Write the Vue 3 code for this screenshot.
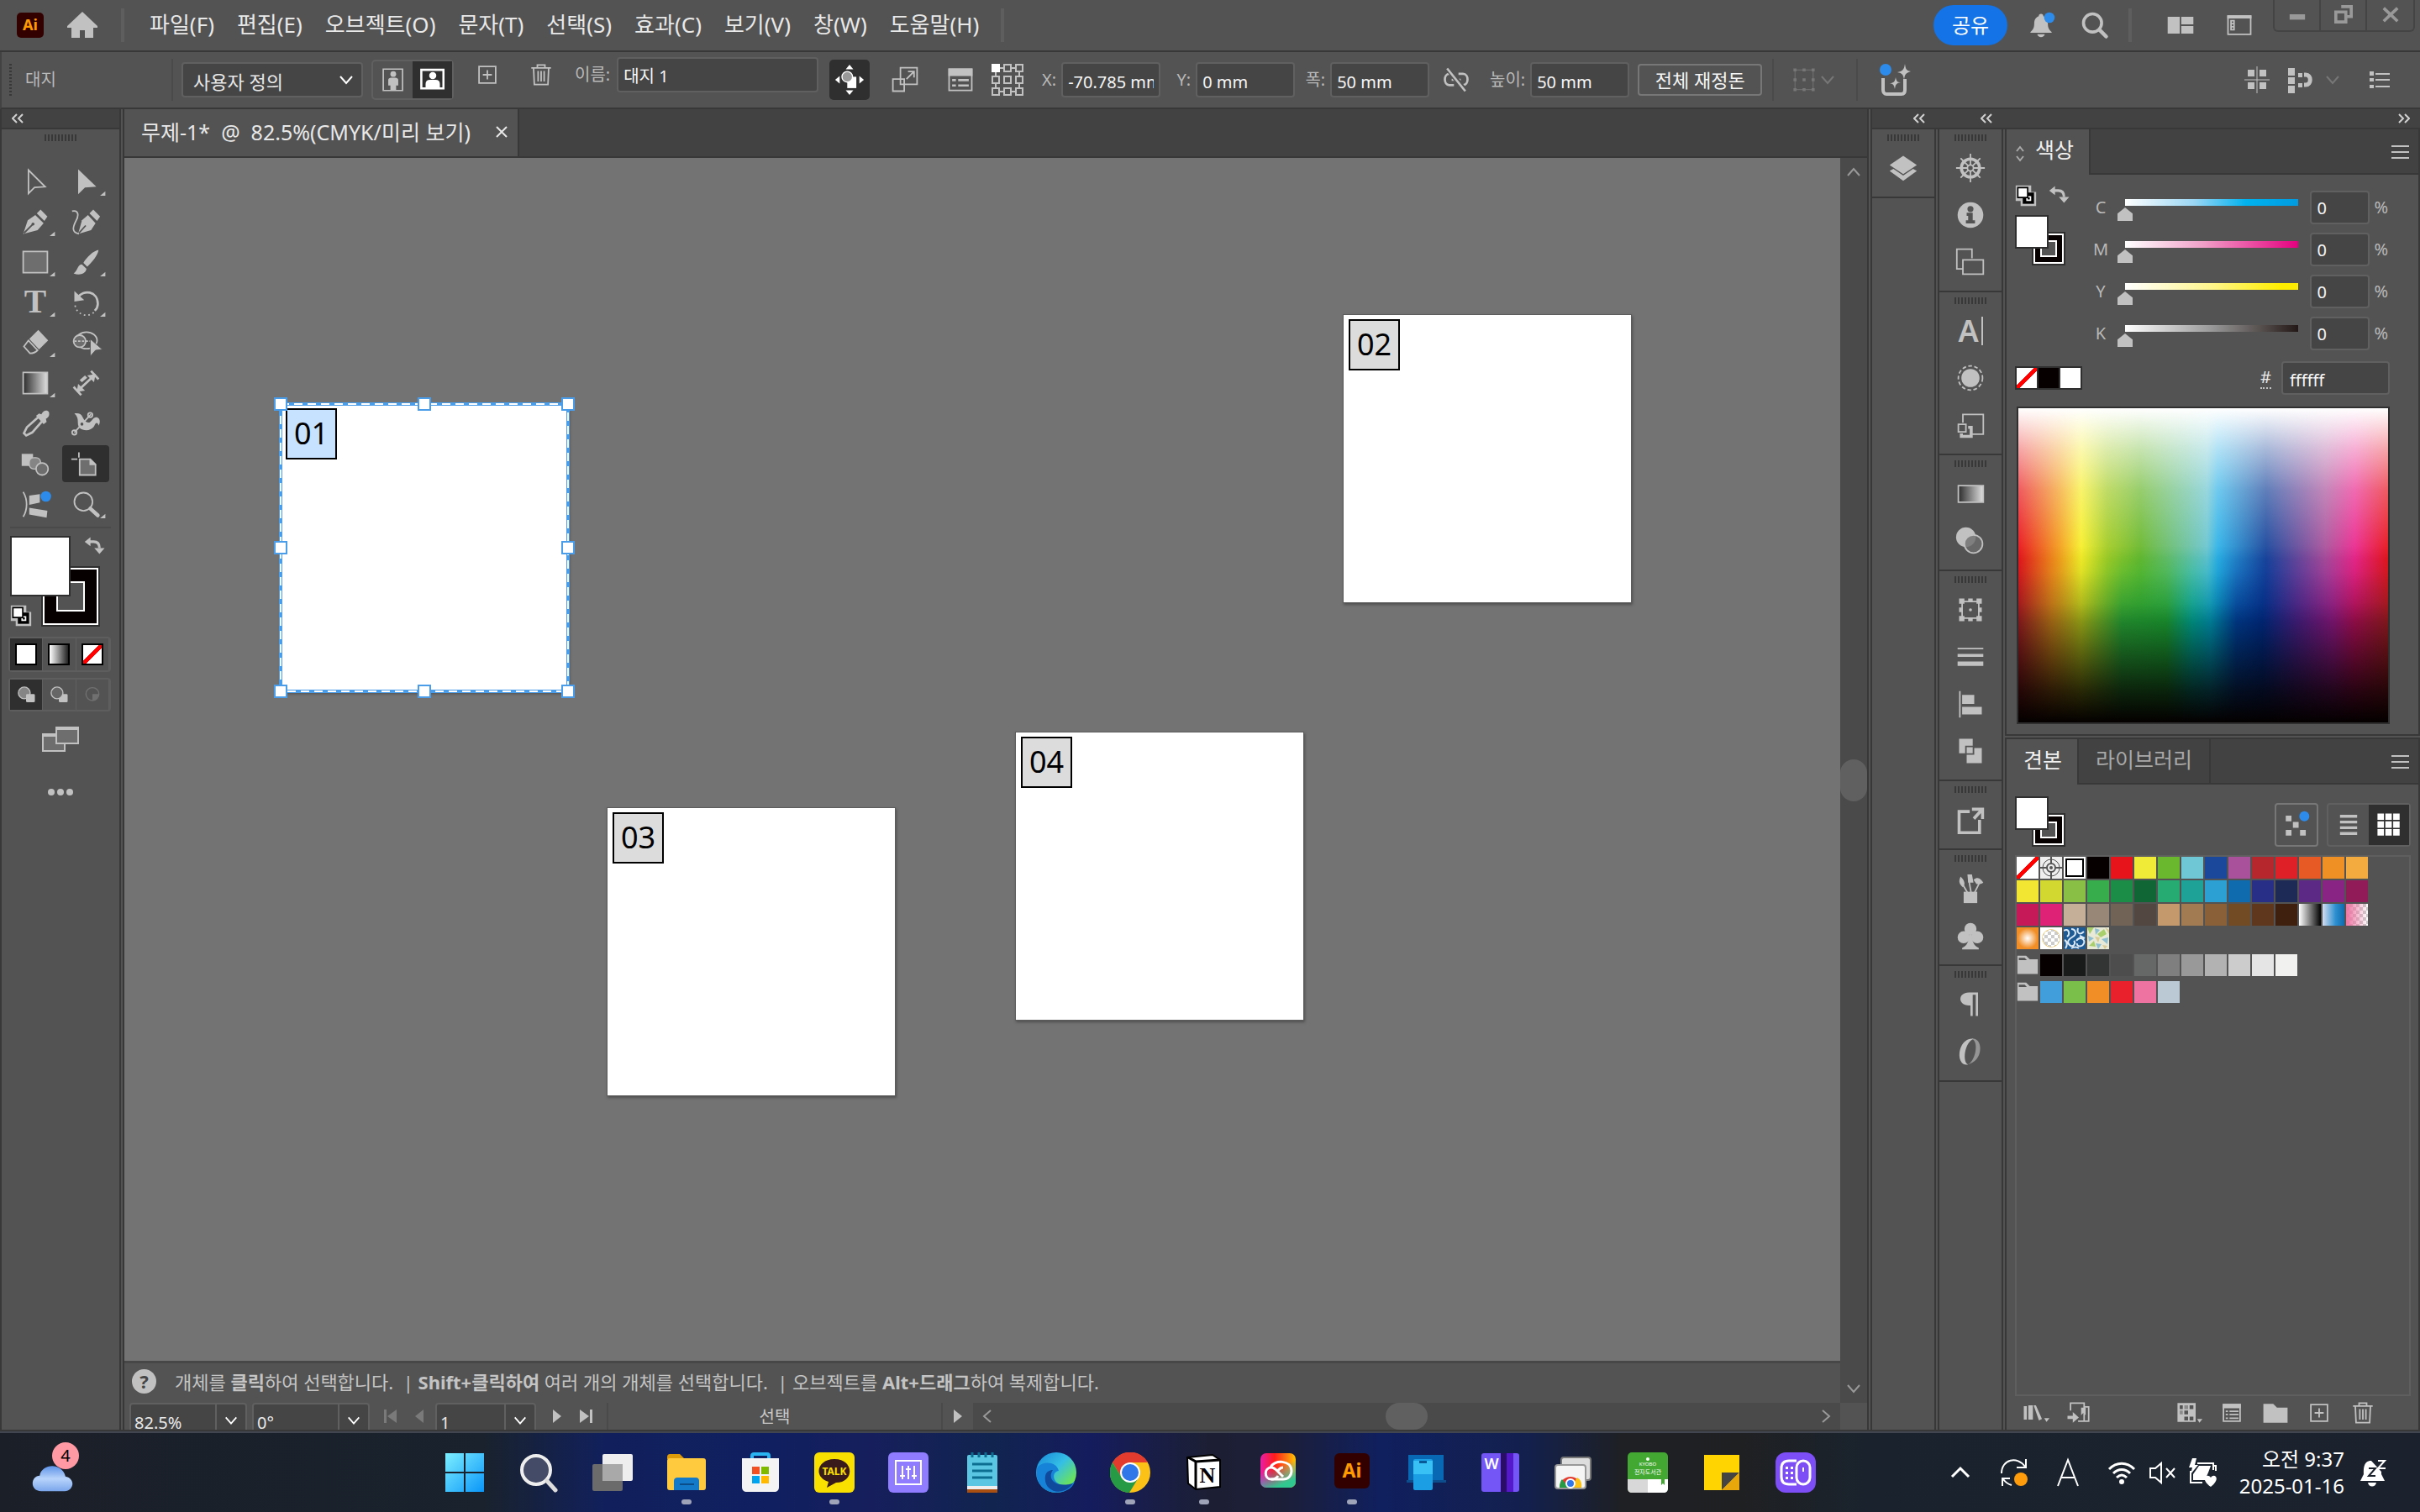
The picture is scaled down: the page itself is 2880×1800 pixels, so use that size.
<script setup>
import { ref } from 'vue'

const line = 'fill="none" stroke="currentColor" stroke-width="2"'
const thick = 'fill="none" stroke="currentColor" stroke-width="3"'

// 40x40 icons
const icons = {
  home: '<path d="M20 4 38 21V23H33V35H23V26H17V35H7V23H2V21Z"/>',
  bell: '<path d="M20 5c2 0 3 1 3 3 5 2 6 6 6 10 0 6 2 8 5 11v1H6v-1c3-3 5-5 5-11 0-4 1-8 6-10 0-2 1-3 3-3zM15 32h10c-1 5-9 5-10 0z"/><circle cx="31" cy="10" r="7" fill="#2d8ceb"/>',
  search: '<circle cx="17" cy="17" r="12" fill="none" stroke="currentColor" stroke-width="4"/><path d="m26 26 9 9" fill="none" stroke="currentColor" stroke-width="5" stroke-linecap="round"/>',
  layout: '<path d="M3 9h16v22H3zM21 9h16v10H21zM21 21h16v10H21z"/>',
  panel: `<path d="M5 8h30v24H5z" ${line}/><path d="M4 7h32v4H4zM8 13h6v14H8z"/><path d="M10 15h2v2h-2zM10 19h2v2h-2zM10 23h2v2h-2z" fill="#535353"/>`,
  portrait: `<path d="M6 5h27v30H6z" ${line}/><circle cx="20" cy="12" r="4"/><path d="M13 20c0-2 2-3 4-3h6c2 0 4 1 4 3v8h-3v7h-8v-7h-3z"/>`,
  landscape: `<path d="M4 6h31v26H4z" ${thick}/><circle cx="20" cy="14" r="5"/><path d="M10 32v-6c0-4 2-6 6-6h8c4 0 6 2 6 6v6z"/>`,
  add: `<path d="M9 9h22v22H9zM20 14v12M14 20h12" ${line}/>`,
  trash: `<path d="M7 11h26M15 10V7h10v3M10 11l1 22h18l1-22M16 15v14M20 15v14M24 15v14" ${line}/>`,
  move: '<path d="m20 0 5 6H15zM20 40l5-6H15zM1 20l6-5v10zM39 20l-6-5v10z"/><path d="M17 16h12v15H17z"/><circle cx="17" cy="16" r="7" fill="#999" stroke="#fff" stroke-width="1.5"/>',
  scale: `<path d="M14 4h22v22H14zM4 19h15v16H4z" ${line}/><path d="m22 19 9-9M24 9h8v8" ${line}/>`,
  options: `<path d="M5 6h30v28H5z" ${line}/><path d="M4 5h32v10H4zM9 19h5v3H9zM9 26h5v3H9zM17 19h14v3H17zM17 26h14v3H17z"/>`,
  refpoint: `<path d="M2 2h8v8H2zM16 2h8v8h-8zM30 2h8v8h-8zM2 16h8v8H2zM16 16h8v8h-8zM30 16h8v8h-8zM2 30h8v8H2zM16 30h8v8h-8zM30 30h8v8h-8zM10 6h6M24 6h6M10 34h6M24 34h6M6 10v6M34 10v6M6 24v6M34 24v6" ${line}/><path d="M1 1h10v10H1z" fill="#fff"/>`,
  unlink: `<path d="M17 12h-6c-8 0-8 15 0 15h6M23 12h6c8 0 8 15 0 15h-6M14 20h12" ${thick}/><path d="M8 4 33 36" stroke="#535353" stroke-width="7"/><path d="M8 5 32 35" ${thick}/>`,
  reshape: '<path d="M6 5h4v4H6zM18 5h4v4h-4zM30 5h4v4h-4zM6 18h4v4H6zM18 18h4v4h-4zM30 18h4v4h-4zM6 31h4v4H6zM18 31h4v4h-4zM30 31h4v4h-4z"/><path d="M8 7h24v26H8z" fill="none" stroke="currentColor"/>',
  sparkle: '<path d="M6 18v14c0 3 2 5 4 5h18c3 0 4-2 4-5V19" fill="none" stroke="currentColor" stroke-width="4"/><path d="M32 1c1 7 2 8 7 9-6 2-7 3-8 10-1-7-3-8-8-9 6-1 8-3 9-10zM21 17c1 5 2 6 6 6-5 1-6 2-7 8-1-5-2-6-6-7 5 0 6-2 7-7z"/><circle cx="9" cy="8" r="7" fill="#2d8ceb"/>',
  tiles: '<path d="M9 8h8v8H9zM23 8h8v8h-8zM9 23h8v8H9zM23 23h8v8h-8z"/><path d="M20 4v32M5 20h30" stroke="currentColor"/>',
  snap: '<path d="M3 6h8v9H3zM3 17h8v8H3zM3 27h8v9H3zM15 12h5v5h-5zM15 24h5v5h-5z"/><path d="M22 14h2c7 0 7 12 0 12h-2" fill="none" stroke="currentColor" stroke-width="5"/>',
  list: '<path d="M8 10h5v5H8zM8 18h5v4H8zM8 26h5v4H8zM15 12h17v2H15zM15 19h17v2H15zM15 27h17v2H15z"/>',
  menu: '<path d="M10 12h21v2H10zM10 19h21v2H10zM10 26h21v2H10z"/>',
  select: `<path d="M11 5v31l8-8 14-1z" ${line}/>`,
  direct: '<path d="M10 4v33l9-9 15-1z"/>',
  pen: '<path d="M4 36 10 18 20 11 31 22 23 31Z"/><path d="M22 9 27 4 36 13 32 19Z"/><path d="m5 35 11-11" stroke="#535353" stroke-width="2"/><circle cx="17" cy="23" r="2" fill="#535353"/>',
  curve: `<path d="M10 36 15 18 23 11 33 22 27 31Z"/><path d="M25 9 30 4 39 13 35 19Z"/><path d="m11 35 9-10" stroke="#535353" stroke-width="2"/><path d="M2 6c9-2 9 6 5 13-4 8-6 15 4 17" ${line}/>`,
  rect: '<path d="M4 6h32v28H4z" fill="#6e6e6e" stroke="currentColor" stroke-width="2"/>',
  brush: '<path d="M37 4c-7 1-16 10-20 17l5 5C29 20 36 11 37 4zM15 23c-6 0-5 8-11 12 7 3 16 1 17-6z"/>',
  rotate: `<path d="M9 14C17 2 36 5 36 22c0 4-2 7-4 9" ${thick}/><path d="M5 5v14l13-2z"/><path d="M6 24c2 13 18 17 26 8" fill="none" stroke="currentColor" stroke-width="2" stroke-dasharray="2 4"/>`,
  eraser: `<path d="M24 3 37 17 25 29 12 15Z"/><path d="m11 17-6 8 8 9c6 0 8-2 10-4z" ${line}/>`,
  builder: `<ellipse cx="21" cy="17" rx="14" ry="11" ${line}/><circle cx="12" cy="18" r="8" fill="#6e6e6e" stroke="currentColor" stroke-width="2"/><path d="M5 18h22" stroke="currentColor" stroke-width="2" stroke-dasharray="3 2"/><path d="M26 15v23l7-8 9-1z" stroke="#535353" stroke-width="1"/>`,
  gradient: '<path d="M4 6h32v28H4z" fill="url(#gray-ramp)" stroke="currentColor" stroke-width="2"/>',
  measure: `<path d="m27 4 10 11M4 25l10 11M11 29l19-18" ${thick}/><path d="m33 8-2 11-9-9zM8 32l2-11 9 9zM12 16l7-6 3 3-7 6z"/>`,
  dropper: `<path d="M26 10 9 25 5 33l3 3 8-4 15-17" ${thick}/><path d="m21 10 4-3 3 1c3-6 8-6 10-3 1 4 0 7-4 9l1 4-4 3z"/>`,
  warp: `<path d="M5 7c5-1 9 0 11 5 2 4 6 9 10 6 3-2 4-7 9-6 5 2 4 8 2 11-1-4-3-5-5-1-3 8-14 9-20 4C7 21 13 14 5 7z"/><path d="M5 32 27 8" ${line}/><circle cx="5" cy="32" r="3" ${line}/><circle cx="26" cy="9" r="3" ${line}/><circle cx="15" cy="21" r="3" fill="#535353" stroke="currentColor" stroke-width="2"/>`,
  blend: '<path d="M2 7h15v16H2z"/><rect x="12" y="12" width="15" height="15" rx="6" fill="#858585" stroke="currentColor" stroke-width="1.5"/><circle cx="29" cy="27" r="8" fill="#6e6e6e" stroke="currentColor" stroke-width="2"/>',
  artboard: `<path d="M12 14h14l7 7v14H12z" fill="#6e6e6e" stroke="currentColor" stroke-width="2"/><path d="M25 14v8h9z"/><path d="M11 5v7M1 14h8" ${line}/>`,
  slice: `<path d="M4 4c6 10 6 23 0 33" ${line}/><path d="m12 9 14-2v11l-14 3zM12 25l24 4-1 9-23-4z"/><circle cx="34" cy="10" r="7" fill="#2d8ceb"/>`,
  zoom: `<circle cx="17" cy="17" r="12" ${line}/><path d="m26 26 10 9" fill="none" stroke="currentColor" stroke-width="5" stroke-linecap="round"/>`,
  swap: '<path d="M12 13h7c7 0 9 4 9 10" fill="none" stroke="currentColor" stroke-width="4"/><path d="M5 13l9-7v14zM20 23h16l-8 9z"/>',
  defaults: '<path d="M7 7h22v9h7v20H14v-7H7z" fill="#c1c1c1"/><path d="M17 17h16v16H17z" fill="#000"/><path d="M23 23h5v5h-5z" fill="none" stroke="#fff" stroke-width="2"/><path d="M10 10h14v14H10z" fill="#fff" stroke="#000" stroke-width="2"/>',
  screens: `<path d="M1 15h26v20H1z" fill="#6e6e6e" stroke="currentColor" stroke-width="2"/><path d="M17 7h26v19H17z" fill="#6e6e6e" stroke="currentColor" stroke-width="2"/><path d="M16 6h28v4H16zM0 14h16v4H0z"/>`,
  drawNormal: '<circle cx="17" cy="17" r="10" fill="#858585" stroke="currentColor" stroke-width="2"/><rect x="20" y="19" width="15" height="14" rx="2"/>',
  drawBehind: '<rect x="20" y="19" width="15" height="14" rx="2"/><circle cx="17" cy="17" r="10" fill="#666" stroke="currentColor" stroke-width="2"/>',
  drawInside: `<circle cx="20" cy="19" r="11" ${line}/><path d="M20 19h10v3c-2 6-5 8-10 8z"/>`,
  layers: '<path d="M20 4 38 16 20 28 2 16Z"/><path d="m2 24 5-3 13 9 13-9 5 3-18 13z"/>',
  wheel: `<circle cx="20" cy="20" r="12" fill="none" stroke="currentColor" stroke-width="4"/><circle cx="20" cy="20" r="4" ${line}/><path d="M20 1v15M20 24v15M1 20h15M24 20h15M7 7l10 10M23 23l10 10M33 7 23 17M17 23 7 33" ${line}/>`,
  info: '<circle cx="20" cy="20" r="17"/><circle cx="20" cy="12" r="4" fill="#535353"/><path d="M15 17h8v10h3v4H14v-4h3v-6h-2z" fill="#535353"/>',
  copies: `<path d="M10 29H2V3h20v12M10 17h27v19H10z" ${line}/>`,
  stars: `<circle cx="20" cy="20" r="12"/><circle cx="20" cy="20" r="16" fill="none" stroke="currentColor" stroke-width="2" stroke-dasharray="5 3"/>`,
  graphicStyle: `<path d="M10 17V6h27v26H19" ${line}/><path d="M4 19h10v10H4z" ${line}/><path d="M17 23h4v12H8v-4" fill="none" stroke="currentColor" stroke-width="4"/>`,
  gradientDock: '<path d="M4 9h33v22H4z" fill="url(#gray-ramp)" stroke="currentColor" stroke-width="2"/>',
  transparency: '<circle cx="14" cy="15" r="13"/><circle cx="24" cy="24" r="12" fill="#6e6e6e" fill-opacity=".8" stroke="currentColor" stroke-width="2"/>',
  transform: `<path d="M9 9h22v22H9z" ${line}/><path d="M5 5h7v7H5zM17 5h6v5h-6zM28 5h7v7h-7zM5 17h5v6H5zM30 17h5v6h-5zM5 28h7v7H5zM17 30h6v5h-6zM28 28h7v7h-7z"/><circle cx="20" cy="20" r="2"/>`,
  stroke: '<path d="M3 8h34v2H3zM3 16h34v4H3zM3 26h34v6H3z"/>',
  align: '<path d="M5 3h2v35H5zM9 8h16v12H9zM9 24h26v10H9z"/>',
  pathfinder: '<path d="M5 4h18v12h12v20H15V23H5z"/><path d="M14 14h10v10H14z" fill="#c1c1c1" stroke="#535353" stroke-width="2"/>',
  exportTo: `<path d="M19 9H5v28h27V20" fill="none" stroke="currentColor" stroke-width="4"/><path d="M22 4h16v15h-4v-8L26 20l-3-3 8-9h-9z"/>`,
  brushes: '<path d="M11 24h18v15H11z"/><path d="m9 13 7 12M18 9l3 17M32 12l-7 14" fill="none" stroke="currentColor" stroke-width="2"/><path d="M7 4c-3 6-2 10 3 14 4-4 2-9-3-14zM16 1h6l2 11h-7zM24 8c6-5 10-1 13 4-4 3-8 2-9 2z"/>',
  club: '<circle cx="20" cy="11" r="8"/><circle cx="11" cy="22" r="8"/><circle cx="29" cy="22" r="8"/><path d="M18 18h4c0 9 2 15 9 18v2H9v-2c7-3 9-9 9-18z"/>',
  paragraph: '<path d="M18 4h12v31h-3V7h-4v28h-3V21h-2C3 21 3 4 18 4z"/>',
  openType: '<path d="M24 3C10 1 2 20 7 32c2 5 7 6 10 5C9 34 12 8 24 3z"/><path d="M22 3c15-2 16 30-6 34 10-3 16-30 6-34z" opacity=".6"/>',
  spread: '<path d="M5 7h8v8H5zM15 16h8v8h-8zM5 27h8v8H5zM25 27h8v8h-8z"/><circle cx="31" cy="8" r="7" fill="#2d8ceb"/>',
  rows: '<path d="M8 6h24v4H8zM8 14h24v4H8zM8 22h24v4H8zM8 30h24v4H8z"/>',
  grid: '<path d="M4 4h9v9H4zM15 4h9v9h-9zM26 4h9v9h-9zM4 15h9v9H4zM15 15h9v9h-9zM26 15h9v9h-9zM4 26h9v9H4zM15 26h9v9h-9zM26 26h9v9h-9z"/>',
  folder: '<path d="M6 8h12l5 5h11v20H6zM8 11v3h11l-3-3z" fill-rule="evenodd"/>',
  library: '<path d="M5 11h4v18H5zM11 10h6v19h-6zM18 10h3l8 18-4 2zM32 27h7l-4 5z"/>',
  place: `<path d="M9 17V7h18v24h6V12h-5M19 31h14" ${line}/><path d="M5 24h7v-5l8 7-8 7v-5H5zM23 13h6v10l-3-3-3 3z"/>`,
  kinds: '<path d="M6 7h24v25H6zM32 28h7l-4 5z"/><path d="M9 10h4v5H9zM22 10h5v5h-5zM15 17h5v5h-5zM15 25h5v5h-5zM22 25h5v5h-5z" fill="#535353"/><path d="M15 10h5v5h-5zM9 17h4v5H9z" fill="#8a8a8a"/>',
  sheet: `<path d="M9 9h22v22H9z" ${line}/><path d="M8 8h24v6H8zM12 17h3v2h-3zM12 21h3v2h-3zM12 26h3v2h-3zM17 17h12v2H17zM17 21h12v2H17zM17 26h12v2H17z"/>`,
  folderSolid: '<path d="M4 8h13l5 5h14v20H4z"/>'
}

const menus = ['파일(F)', '편집(E)', '오브젝트(O)', '문자(T)', '선택(S)', '효과(C)', '보기(V)', '창(W)', '도움말(H)']

const tools = [
  { name: 'select', label: '선택 도구' },
  { name: 'direct', label: '직접 선택 도구', more: true },
  { name: 'pen', label: '펜 도구', more: true },
  { name: 'curve', label: '곡률 도구' },
  { name: 'rect', label: '사각형 도구', more: true },
  { name: 'brush', label: '페인트브러쉬 도구', more: true },
  { name: 'type', label: '문자 도구', more: true },
  { name: 'rotate', label: '회전 도구', more: true },
  { name: 'eraser', label: '지우개 도구', more: true },
  { name: 'builder', label: '도형 구성 도구' },
  { name: 'gradient', label: '그레이디언트 도구', more: true },
  { name: 'measure', label: '치수 도구' },
  { name: 'dropper', label: '스포이드 도구' },
  { name: 'warp', label: '퍼펫 뒤틀기 도구' },
  { name: 'blend', label: '블렌드 도구' },
  { name: 'artboard', label: '대지 도구' },
  { name: 'slice', label: '교차 도구' },
  { name: 'zoom', label: '돋보기 도구', more: true }
]
const activeTool = ref('artboard')

const artboards = [
  { no: '01', x: 186, y: 293 },
  { no: '02', x: 1451, y: 187 },
  { no: '03', x: 575, y: 774 },
  { no: '04', x: 1061, y: 684 }
]
const activeBoard = ref('01')
const handles = [[0, 0], [171, 0], [342, 0], [0, 171], [342, 171], [0, 342], [171, 342], [342, 342]]

const dockGroups = [
  ['wheel', 'info', 'copies'],
  ['character', 'stars', 'graphicStyle'],
  ['gradientDock', 'transparency'],
  ['transform', 'stroke', 'align', 'pathfinder'],
  ['exportTo'],
  ['brushes', 'club'],
  ['paragraph', 'openType']
]

const channels = ref([
  { key: 'c', value: 0 },
  { key: 'm', value: 0 },
  { key: 'y', value: 0 },
  { key: 'k', value: 0 }
])
const hex = ref('ffffff')

const swatches = [
  'none', 'registration', 'white', '#060000', '#e8141b', '#f0eb37', '#6ab82e', '#6fc6d4', '#1c489b', '#a9529b', '#b5262d', '#df2027', '#e75a26', '#ef9025', '#f3ab40',
  '#f2e632', '#d2d82f', '#89bf45', '#38ad4b', '#1c8d46', '#116636', '#26ab72', '#1ea297', '#2c9fd3', '#0f6bae', '#272f87', '#1c2a55', '#5c2a85', '#892384', '#911b59',
  '#c51a57', '#de2276', '#c5af98', '#988776', '#716456', '#534741', '#c49a6c', '#a37b52', '#896038', '#724b24', '#5e371c', '#3f200f', 'bw', 'blue', 'pink',
  'glow', 'checker', 'waves', 'leaves'
]
const grays = ['#060000', '#191b1b', '#333535', '#4d4d4d', '#666767', '#7f7f7f', '#999', '#b2b2b2', '#ccc', '#e5e5e5', '#f1f1f0']
const brights = ['#429ddb', '#7abf4a', '#f18e26', '#e8212d', '#ee73a1', '#bac9d3']

const isColor = (s) => s.startsWith('#')

// 48x48 taskbar icons
const apps = [
  { id: 'start', svg: '<path d="M1 1h22v22H1zM25 1h22v22H25zM1 25h22v22H1zM25 25h22v22H25z" fill="url(#win)"/>' },
  { id: 'search', svg: '<circle cx="21" cy="21" r="17" fill="#444b66" stroke="#eee" stroke-width="4"/><path d="m34 34 10 11" stroke="#ddd" stroke-width="5" stroke-linecap="round"/>' },
  { id: 'taskview', svg: '<rect x="12" y="2" width="36" height="32" rx="2" fill="#eee"/><rect y="14" width="36" height="32" rx="2" fill="#6b6b6b"/><path d="M12 14h24v20H12z" fill="#a9a9a9"/>' },
  { id: 'explorer', run: true, svg: '<path d="M1 6c0-3 1-4 4-4h11l6 6H1z" fill="#dd9b09"/><rect x="1" y="7" width="46" height="38" rx="3" fill="#ffca3e"/><path d="M9 45V34c0-3 2-4 4-4h22c3 0 4 2 4 4v11z" fill="#1379c9"/><path d="M16 37h17v2H16z" fill="#0b4d88"/>' },
  { id: 'store', svg: '<path d="M12 12V4c0-3 2-4 4-4h16c3 0 4 2 4 4v8h-4V4H16v8z" fill="#2ab4f1"/><path d="M2 7h44v34c0 4-2 6-6 6H8c-4 0-6-2-6-6z" fill="#f4f4f4"/><path d="M14 17h9v9h-9z" fill="#f25022"/><path d="M25 17h9v9h-9z" fill="#7fba00"/><path d="M14 28h9v9h-9z" fill="#00a4ef"/><path d="M25 28h9v9h-9z" fill="#ffb900"/>' },
  { id: 'talk', run: true, svg: '<rect width="48" height="48" rx="6" fill="#f9e000"/><path d="M24 8c24 0 24 28 2 28l-11 6 2-7C-2 29 4 8 24 8z" fill="#391b1b"/><text x="24" y="27" font-size="12" font-weight="700" text-anchor="middle" fill="#f9e000">TALK</text>' },
  { id: 'mixer', svg: '<rect width="48" height="48" rx="6" fill="#8f7cff"/><path d="M9 10h30v28H9zM17 16v16M24 16v16M31 16v16M14 28h6M21 20h6M28 28h6" fill="none" stroke="#fff" stroke-width="2"/>' },
  { id: 'notepad', svg: '<rect x="6" y="3" width="36" height="44" rx="2" fill="#5ac6e2"/><path d="M6 40h36v4H6z" fill="#eee"/><path d="M6 44h36v4H6z" fill="#a94f12"/><path d="M12 0v6M20 0v6M28 0v6M36 0v6M12 14h24M12 22h24M12 30h24" stroke="#0c6f91" stroke-width="3"/>' },
  { id: 'edge', svg: '<circle cx="24" cy="24" r="24" fill="url(#edge)"/><path d="M1 19C6 10 24 10 27 22c-8 1-8 12 1 16 8 3 14 1 18-4-2 9-12 14-22 14C8 48-2 34 1 19z" fill="#1683d8"/><path d="M20 21c-7 10 2 22 24 16-12 17-36 10-33-9 1-5 5-7 9-7z" fill="#0f4a9c"/>' },
  { id: 'chrome', run: true, svg: '<circle cx="24" cy="24" r="24" fill="#fbc116"/><path d="M3 12a24 24 0 0 1 42 0H24L14 30z" fill="#e33b2e"/><path d="M3 12a24 24 0 0 0 20 36l11-18-20 0z" fill="#269a45"/><circle cx="24" cy="24" r="12" fill="#fff"/><circle cx="24" cy="24" r="10" fill="#3078ea"/>' },
  { id: 'notion', run: true, svg: '<path d="m4 6 30-3 9 6v32l-29 3-9-7z" fill="#fff" stroke="#000" stroke-width="2"/><path d="m5 6 9 5v33M14 11l29-2" fill="none" stroke="#000" stroke-width="3"/><text x="28" y="36" font-size="26" font-weight="700" font-family="Liberation Serif" text-anchor="middle">N</text>' },
  { id: 'cloud', svg: '<rect x="3" y="1" width="42" height="41" rx="7" fill="url(#cc)"/><rect x="3" y="1" width="42" height="41" rx="7" fill="url(#cc-low)"/><path d="M24 28c-2 3-5 4-8 4-9 0-9-14 0-14 3 0 5 2 7 4l7 7" fill="none" stroke="#fff" stroke-width="3"/><path d="M15 18c4-10 25-9 25 4 0 6-4 10-10 10H16M30 18c-3 0-5 2-7 5" fill="none" stroke="#fff" stroke-width="3"/>' },
  { id: 'ai', run: true, svg: '<rect x="3" y="1" width="42" height="42" rx="6" fill="#330000"/><text x="24" y="30" font-size="23" font-weight="700" text-anchor="middle" fill="#ff9a00">Ai</text>' },
  { id: 'phone', svg: '<path d="M3 3h42v31H3z" fill="#0968b3"/><path d="M1 33h47v3H1z" fill="#0b4d8d"/><rect x="9" y="8" width="23" height="37" rx="2" fill="#1b9ee3"/><path d="M9 10h23v16H9z" fill="#37c1f4"/><path d="M16 10h9v3h-9z" fill="#075997"/>' },
  { id: 'wbook', svg: '<rect x="2" y="1" width="45" height="46" rx="3" fill="#7455f5"/><path d="M25 1h7v46h-7z" fill="#2a0d66"/><path d="M32 1h8v46h-8z" fill="#5618cb"/><text x="14" y="20" font-size="18" font-weight="600" text-anchor="middle" fill="#fff">W</text>' },
  { id: 'remote', svg: '<rect x="9" y="6" width="35" height="27" rx="3" fill="#ddd" stroke="#777" stroke-width="2"/><rect x="2" y="15" width="36" height="28" rx="3" fill="#f5f5f5" stroke="#999" stroke-width="2"/><path d="M7 42a13 13 0 0 1 26 0z" fill="#e33b2e"/><path d="M20 42l8-12c4 2 6 7 5 12z" fill="#fbc116"/><path d="M7 42c0-4 1-8 3-10l8 10z" fill="#269a45"/><circle cx="20" cy="37" r="5" fill="#3078ea" stroke="#fff" stroke-width="2"/>' },
  { id: 'library', svg: '<rect width="48" height="48" rx="5" fill="#43a832"/><path d="M0 32h24v16H5c-3 0-5-2-5-5z" fill="#d8d8d8"/><path d="M24 32h24v11c0 3-2 5-5 5H24z" fill="#fff"/><path d="M40 32h4v7l-2-2-2 2z" fill="#43a832"/><circle cx="24" cy="8" r="2" fill="#fff"/><text x="24" y="16" font-size="6" text-anchor="middle" fill="#fff">KYOBO</text><text x="24" y="26" font-size="7" text-anchor="middle" fill="#fff">전자도서관</text>' },
  { id: 'sticky', svg: '<path d="M3 3h42v42H3z" fill="#ffd400"/><path d="M24 24h21L24 45z" fill="#444"/><path d="M45 24v21H24z" fill="#e8a80b"/>' },
  { id: 'capture', svg: '<rect width="48" height="48" rx="12" fill="#7d4df5"/><path d="M25 10h-9c-6 0-9 3-9 9v10c0 6 3 9 9 9h9" fill="none" stroke="#fff" stroke-width="3"/><rect x="25" y="10" width="16" height="28" rx="8" fill="none" stroke="#fff" stroke-width="3"/><path d="M12 17h3v3h-3zM18 17h3v3h-3zM12 23h3v3h-3zM18 23h3v3h-3zM12 29h3v3h-3zM18 29h3v3h-3zM32 18h2v5h-2z" fill="#fff"/>' }
]
</script>

<template>
  <div class="app">
    <svg class="defs" aria-hidden="true">
      <defs>
        <linearGradient id="gray-ramp"><stop offset="0" stop-color="#2c2c2c" /><stop offset="1" stop-color="#e0e0e0" /></linearGradient>
        <linearGradient id="win" x2="1" y2="1"><stop offset="0" stop-color="#7defff" /><stop offset="1" stop-color="#0a96f8" /></linearGradient>
        <linearGradient id="edge" x2="1" y2="1"><stop offset="0" stop-color="#1686d9" /><stop offset=".45" stop-color="#35bfe5" /><stop offset=".8" stop-color="#6ae35a" /></linearGradient>
        <linearGradient id="cc"><stop offset="0" stop-color="#e81ea8" /><stop offset=".4" stop-color="#ff1c1c" /><stop offset=".75" stop-color="#ff7a10" /><stop offset="1" stop-color="#ffc800" /></linearGradient>
        <linearGradient id="cc-low" x2=".4" y2="1"><stop offset=".5" stop-color="#3aa0f0" stop-opacity="0" /><stop offset="1" stop-color="#30c890" /></linearGradient>
        <linearGradient id="sky" x2="0" y2="1"><stop offset="0" stop-color="#5e93e8" /><stop offset=".5" stop-color="#b8d4fb" /><stop offset="1" stop-color="#7ba6ec" /></linearGradient>
      </defs>
    </svg>

    <!-- 메뉴 막대 -->
    <header class="menubar">
      <span class="ai-logo">Ai</span>
      <button class="plain home" aria-label="홈"><svg class="icon" viewBox="0 0 40 40" v-html="icons.home"></svg></button>
      <span class="rule"></span>
      <nav class="menus">
        <button v-for="m in menus" :key="m" class="plain">{{ m }}</button>
      </nav>
      <span class="rule"></span>
      <div class="menubar-right">
        <button class="share">공유</button>
        <button class="plain cell" aria-label="알림"><svg class="icon" viewBox="0 0 40 40" v-html="icons.bell"></svg></button>
        <button class="plain cell" aria-label="검색"><svg class="icon" viewBox="0 0 40 40" v-html="icons.search"></svg></button>
        <span class="rule"></span>
        <div class="workspace">
          <button class="plain" aria-label="문서 정돈"><svg class="icon" viewBox="0 0 40 40" v-html="icons.layout"></svg></button>
          <button class="plain" aria-label="작업 영역"><svg class="icon" viewBox="0 0 40 40" v-html="icons.panel"></svg></button>
        </div>
        <div class="window-buttons">
          <button aria-label="최소화"><svg viewBox="0 0 24 24"><path d="M2 12h20v7H2z" /></svg></button>
          <button aria-label="이전 크기로"><svg viewBox="0 0 24 24"><path d="M9 2h13v13h-7M2 9h13v13H2z" fill="none" stroke="currentColor" stroke-width="4" /></svg></button>
          <button aria-label="닫기"><svg viewBox="0 0 24 24"><path d="m3 4 18 17M21 4 3 21" fill="none" stroke="currentColor" stroke-width="4" /></svg></button>
        </div>
      </div>
    </header>

    <!-- 옵션 막대 -->
    <section class="options">
      <span class="dot-grip"></span>
      <span class="mode">대지</span>
      <span class="vline"></span>
      <div class="combo preset">
        <select aria-label="사전 설정"><option>사용자 정의</option></select>
        <svg viewBox="0 0 20 20"><path d="m3 6 7 8 7-8" /></svg>
      </div>
      <div class="orient">
        <button class="plain" aria-label="세로"><svg class="icon" viewBox="0 0 40 40" v-html="icons.portrait"></svg></button>
        <button class="plain on" aria-label="가로"><svg class="icon" viewBox="0 0 40 40" v-html="icons.landscape"></svg></button>
      </div>
      <div class="name-group">
        <button class="plain cell" aria-label="새 대지"><svg class="icon" viewBox="0 0 40 40" v-html="icons.add"></svg></button>
        <button class="plain cell" aria-label="대지 삭제"><svg class="icon" viewBox="0 0 40 40" v-html="icons.trash"></svg></button>
        <label for="board-name">이름:</label>
        <input id="board-name" class="box" value="대지 1" />
      </div>
      <button class="plain move on" aria-label="아트웍 이동"><svg class="icon" viewBox="0 0 40 40" v-html="icons.move"></svg></button>
      <div class="option-icons">
        <button class="plain cell" aria-label="크기 조정"><svg class="icon" viewBox="0 0 40 40" v-html="icons.scale"></svg></button>
        <button class="plain cell" aria-label="대지 옵션"><svg class="icon" viewBox="0 0 40 40" v-html="icons.options"></svg></button>
        <button class="plain cell ref" aria-label="기준점"><svg class="icon" viewBox="0 0 40 40" v-html="icons.refpoint"></svg></button>
      </div>
      <div class="field"><label for="pos-x">X:</label><input id="pos-x" class="box" value="-70.785 mm" /></div>
      <div class="field"><label for="pos-y">Y:</label><input id="pos-y" class="box" value="0 mm" /></div>
      <div class="field"><label for="board-w">폭:</label><input id="board-w" class="box" value="50 mm" /></div>
      <button class="plain cell" aria-label="비율 제한"><svg class="icon small" viewBox="0 0 40 40" v-html="icons.unlink"></svg></button>
      <div class="field wide"><label for="board-h">높이:</label><input id="board-h" class="box" value="50 mm" /></div>
      <button class="rearrange">전체 재정돈</button>
      <span class="vline"></span>
      <button class="plain reshape" disabled aria-label="모양 변경">
        <svg class="icon" viewBox="0 0 40 40" v-html="icons.reshape"></svg>
        <svg class="chev" viewBox="0 0 20 20"><path d="m3 6 7 8 7-8" /></svg>
      </button>
      <span class="vline"></span>
      <button class="plain spark" aria-label="생성형 도구"><svg class="icon" viewBox="0 0 40 40" v-html="icons.sparkle"></svg></button>
      <div class="option-right">
        <button class="plain" aria-label="격자"><svg class="icon" viewBox="0 0 40 40" v-html="icons.tiles"></svg></button>
        <button class="plain snap" aria-label="스냅"><svg class="icon" viewBox="0 0 40 40" v-html="icons.snap"></svg></button>
        <svg class="chev" viewBox="0 0 20 20"><path d="m3 6 7 8 7-8" /></svg>
        <button class="plain last" aria-label="옵션 메뉴"><svg class="icon" viewBox="0 0 40 40" v-html="icons.list"></svg></button>
      </div>
    </section>

    <main class="workspace-area">
      <!-- 도구 상자 -->
      <aside class="toolbox">
        <div class="strip"><svg class="dbl" viewBox="0 0 14 12"><path d="M6 1 1 6l5 5M13 1 8 6l5 5" /></svg></div>
        <span class="grip"></span>
        <div class="tools">
          <button
            v-for="t in tools"
            :key="t.name"
            class="plain tool"
            :class="{ on: activeTool === t.name }"
            :aria-label="t.label"
            @click="activeTool = t.name"
          >
            <svg class="icon" viewBox="0 0 40 40">
              <text v-if="t.name === 'type'" class="type-glyph" x="20" y="33" text-anchor="middle">T</text>
              <g v-else v-html="icons[t.name]"></g>
              <path v-if="t.more" d="M46 33v6h-7z" />
            </svg>
          </button>
        </div>
        <div class="hline"></div>
        <div class="paint">
          <span class="stroke-box"><i></i></span>
          <span class="fill-box"></span>
          <button class="plain swap" aria-label="칠과 획 교체"><svg class="icon" viewBox="4 4 34 34" v-html="icons.swap"></svg></button>
          <button class="plain defaults" aria-label="초기값"><svg class="icon" viewBox="6 6 31 31" v-html="icons.defaults"></svg></button>
        </div>
        <div class="trio">
          <button class="on" aria-label="색상"><span class="chip"></span></button>
          <button aria-label="그레이디언트"><span class="chip ramp"></span></button>
          <button aria-label="없음"><span class="chip none"></span></button>
        </div>
        <div class="trio draw">
          <button class="on" aria-label="표준 그리기"><svg class="icon" viewBox="0 0 40 40" v-html="icons.drawNormal"></svg></button>
          <button aria-label="배경 그리기"><svg class="icon" viewBox="0 0 40 40" v-html="icons.drawBehind"></svg></button>
          <button class="off" aria-label="내부 그리기"><svg class="icon" viewBox="0 0 40 40" v-html="icons.drawInside"></svg></button>
        </div>
        <button class="plain screens" aria-label="화면 모드"><svg class="icon" viewBox="0 0 44 40" v-html="icons.screens"></svg></button>
        <button class="plain dots" aria-label="도구 모음 편집"><i></i><i></i><i></i></button>
      </aside>

      <!-- 문서 -->
      <section class="document">
        <div class="doc-tabs">
          <div class="doc-tab">
            <span>무제-1* &nbsp;@ &nbsp;82.5%(CMYK/미리 보기)</span>
            <button class="plain" aria-label="탭 닫기"><svg viewBox="0 0 14 14"><path d="m1 1 12 12M13 1 1 13" /></svg></button>
          </div>
        </div>
        <div class="doc-body">
          <div class="doc-main">
            <div class="canvas">
              <div
                v-for="b in artboards"
                :key="b.no"
                class="board"
                :class="{ active: activeBoard === b.no }"
                :style="{ left: b.x + 'px', top: b.y + 'px' }"
                @click="activeBoard = b.no"
              >
                <span class="board-no">{{ b.no }}</span>
                <svg v-if="activeBoard === b.no" class="marquee" viewBox="0 0 342 342">
                  <rect width="342" height="342" class="edge" />
                  <rect width="342" height="342" class="dash" />
                  <rect v-for="(h, i) in handles" :key="i" :x="h[0] - 7" :y="h[1] - 7" width="14" height="14" class="handle" />
                </svg>
              </div>
            </div>
            <div class="hint">
              <span class="help">?</span>
              <p>개체를 <b>클릭</b>하여 선택합니다. &nbsp;| <b>Shift+클릭하여</b> 여러 개의 개체를 선택합니다. &nbsp;| 오브젝트를 <b>Alt+드래그</b>하여 복제합니다.</p>
            </div>
          </div>
          <div class="vscroll">
            <svg class="chev" viewBox="0 0 20 20"><path d="m3 14 7-8 7 8" /></svg>
            <span class="thumb"></span>
            <svg class="chev" viewBox="0 0 20 20"><path d="m3 6 7 8 7-8" /></svg>
          </div>
        </div>
        <div class="status">
          <div class="combo split zoom">
            <select aria-label="확대/축소"><option>82.5%</option></select>
            <svg viewBox="0 0 20 20"><path d="m3 6 7 8 7-8" /></svg>
          </div>
          <div class="combo split angle">
            <select aria-label="회전"><option>0°</option></select>
            <svg viewBox="0 0 20 20"><path d="m3 6 7 8 7-8" /></svg>
          </div>
          <div class="pager dim">
            <button class="plain" aria-label="처음"><svg viewBox="0 0 18 18"><path d="M1 1h3v16H1zM16 1v16L5 9z" /></svg></button>
            <button class="plain" aria-label="이전"><svg viewBox="0 0 18 18"><path d="M14 1v16L4 9z" /></svg></button>
          </div>
          <div class="combo split page">
            <select aria-label="대지 탐색"><option>1</option></select>
            <svg viewBox="0 0 20 20"><path d="m3 6 7 8 7-8" /></svg>
          </div>
          <div class="pager next">
            <button class="plain" aria-label="다음"><svg viewBox="0 0 18 18"><path d="M4 1v16l10-8z" /></svg></button>
            <button class="plain" aria-label="마지막"><svg viewBox="0 0 18 18"><path d="M14 1h3v16h-3zM2 1v16l11-8z" /></svg></button>
          </div>
          <span class="current">선택</span>
          <button class="plain play" aria-label="상태 메뉴"><svg viewBox="0 0 18 18"><path d="M4 1v16l10-8z" /></svg></button>
          <div class="hscroll">
            <svg class="chev" viewBox="0 0 20 20"><path d="m14 3-8 7 8 7" /></svg>
            <span class="thumb"></span>
            <svg class="chev" viewBox="0 0 20 20"><path d="m6 3 8 7-8 7" /></svg>
          </div>
          <span class="corner"></span>
        </div>
      </section>

      <!-- 오른쪽 패널 -->
      <section class="docks">
        <div class="strip dock-strip">
          <span><svg class="dbl" viewBox="0 0 14 12"><path d="M6 1 1 6l5 5M13 1 8 6l5 5" /></svg></span>
          <span><svg class="dbl" viewBox="0 0 14 12"><path d="M6 1 1 6l5 5M13 1 8 6l5 5" /></svg></span>
          <span><svg class="dbl" viewBox="0 0 14 12"><path d="m1 1 5 5-5 5M8 1l5 5-5 5" /></svg></span>
        </div>
        <div class="dock-cols">
          <div class="dock">
            <div class="dock-group">
              <span class="grip"></span>
              <button class="plain" aria-label="레이어"><svg class="icon" viewBox="0 0 40 40" v-html="icons.layers"></svg></button>
            </div>
          </div>
          <div class="dock">
            <div v-for="(g, i) in dockGroups" :key="i" class="dock-group">
              <span class="grip"></span>
              <button v-for="n in g" :key="n" class="plain" :aria-label="n">
                <span v-if="n === 'character'" class="char-icon">A</span>
                <svg v-else class="icon" viewBox="0 0 40 40" v-html="icons[n]"></svg>
              </button>
            </div>
          </div>
          <div class="panels">
            <div class="panel">
              <div class="tabs">
                <button class="plain tab on color-tab">
                  <svg viewBox="0 0 12 24"><path d="m2 9 4-5 4 5M2 15l4 5 4-5" /></svg>색상
                </button>
                <button class="plain panel-menu" aria-label="패널 메뉴"><svg class="icon" viewBox="0 0 40 40" v-html="icons.menu"></svg></button>
              </div>
              <div class="color-body">
                <div class="mixer">
                  <div class="mini">
                    <div class="mini-tools">
                      <button class="plain" aria-label="초기값"><svg class="icon" viewBox="6 6 31 31" v-html="icons.defaults"></svg></button>
                      <button class="plain" aria-label="교체"><svg class="icon" viewBox="4 4 34 34" v-html="icons.swap"></svg></button>
                    </div>
                    <div class="mini-paint"><span class="stroke-box"><i></i></span><span class="fill-box"></span></div>
                  </div>
                  <div class="sliders">
                    <div v-for="c in channels" :key="c.key" class="slider-row">
                      <label :for="'ch-' + c.key">{{ c.key.toUpperCase() }}</label>
                      <input :id="'ch-' + c.key" v-model.number="c.value" type="range" min="0" max="100" :class="'range-' + c.key" />
                      <input v-model.number="c.value" class="box" :aria-label="c.key.toUpperCase() + ' 값'" />
                      <span>%</span>
                    </div>
                  </div>
                </div>
                <div class="hex-row">
                  <div class="basics"><span class="none"></span><span class="black"></span><span></span></div>
                  <label for="hex">#</label>
                  <input id="hex" v-model="hex" class="box" />
                </div>
                <div class="spectrum"><div class="low"></div><div class="shade"></div></div>
              </div>
            </div>

            <div class="panel grow">
              <div class="tabs">
                <button class="plain tab on">견본</button>
                <button class="plain tab lib">라이브러리</button>
                <button class="plain panel-menu" aria-label="패널 메뉴"><svg class="icon" viewBox="0 0 40 40" v-html="icons.menu"></svg></button>
              </div>
              <div class="swatch-head">
                <div class="mini-paint"><span class="stroke-box"><i></i></span><span class="fill-box"></span></div>
                <button class="plain view single" aria-label="색상 테마"><svg class="icon" viewBox="0 0 40 40" v-html="icons.spread"></svg></button>
                <div class="view-group">
                  <button class="plain view" aria-label="목록 보기"><svg class="icon" viewBox="0 0 40 40" v-html="icons.rows"></svg></button>
                  <button class="plain view on" aria-label="축소판 보기"><svg class="icon" viewBox="0 0 40 40" v-html="icons.grid"></svg></button>
                </div>
              </div>
              <div class="swatch-list">
                <div class="swatch-grid">
                  <template v-for="(s, i) in swatches" :key="i">
                    <span v-if="isColor(s)" class="swatch" :style="{ background: s }"></span>
                    <svg v-else-if="s === 'registration'" class="swatch" viewBox="0 0 26 26">
                      <path d="M0 0h26v26H0z" fill="#eee" />
                      <path d="M0 13h26M13 0v26" stroke="#555" stroke-width="2" />
                      <circle cx="13" cy="13" r="10" fill="none" stroke="#555" />
                      <circle cx="13" cy="13" r="5" fill="#eee" stroke="#555" stroke-width="2" />
                      <circle cx="13" cy="13" r="2" fill="#555" />
                    </svg>
                    <svg v-else-if="s === 'waves'" class="swatch" viewBox="0 0 26 26">
                      <path d="M0 0h26v26H0z" fill="#1d5a94" />
                      <path d="M0 4c6-4 8 4 4 7M9 2c5 0 7 6 2 9s-8 6-4 10 8-2 5-5M17 1c-2 7 3 8 7 4M15 16c4-6 11-2 9 3s-9 4-8 0M1 15c4 2 3 8 1 10M19 10l6 3M9 25c3-2 7-2 9 0" fill="none" stroke="#dce8f4" stroke-width="2" />
                    </svg>
                    <svg v-else-if="s === 'leaves'" class="swatch" viewBox="0 0 26 26">
                      <path d="M0 0h26v26H0z" fill="#e9e9d8" />
                      <path d="M0 0h8L3 8zM12 8l8-6 3 6-7 4zM2 22l6-6 2 7z" fill="#a9cf6d" />
                      <path d="M9 1l6 2-5 6zM1 10l7 3-6 4zM17 14l8-2-1 8zM10 19l7 1-4 6z" fill="#8fbfcf" />
                      <path d="M21 0l5 3v5zM9 11l6 1-2 6zM18 21l6 1-3 4z" fill="#d9cb96" />
                    </svg>
                    <span v-else class="swatch" :class="'sw-' + s"></span>
                  </template>
                </div>
                <div class="swatch-grid">
                  <svg class="swatch folder" viewBox="5 6 30 30" v-html="icons.folder"></svg>
                  <span v-for="c in grays" :key="c" class="swatch" :style="{ background: c }"></span>
                </div>
                <div class="swatch-grid">
                  <svg class="swatch folder" viewBox="5 6 30 30" v-html="icons.folder"></svg>
                  <span v-for="c in brights" :key="c" class="swatch" :style="{ background: c }"></span>
                </div>
              </div>
              <div class="swatch-foot">
                <div>
                  <button class="plain" aria-label="견본 라이브러리"><svg class="icon" viewBox="0 0 40 40" v-html="icons.library"></svg></button>
                  <button class="plain" aria-label="라이브러리에 추가"><svg class="icon" viewBox="0 0 40 40" v-html="icons.place"></svg></button>
                </div>
                <div>
                  <button class="plain" aria-label="견본 종류"><svg class="icon" viewBox="0 0 40 40" v-html="icons.kinds"></svg></button>
                  <button class="plain" aria-label="견본 옵션"><svg class="icon" viewBox="0 0 40 40" v-html="icons.sheet"></svg></button>
                  <button class="plain" aria-label="새 색상 그룹"><svg class="icon" viewBox="0 0 40 40" v-html="icons.folderSolid"></svg></button>
                  <button class="plain" aria-label="새 견본"><svg class="icon" viewBox="0 0 40 40" v-html="icons.add"></svg></button>
                  <button class="plain" aria-label="견본 삭제"><svg class="icon" viewBox="0 0 40 40" v-html="icons.trash"></svg></button>
                </div>
              </div>
            </div>
          </div>
        </div>
      </section>
    </main>

    <!-- 작업 표시줄 -->
    <footer class="taskbar">
      <button class="plain weather" aria-label="날씨">
        <svg viewBox="0 0 56 60"><path d="M12 54C-4 53-1 34 10 34c2-15 28-18 33 1 14 3 10 19-1 19z" fill="url(#sky)" /></svg>
        <span class="badge">4</span>
      </button>
      <nav class="apps">
        <button v-for="a in apps" :key="a.id" class="plain app-btn" :class="{ run: a.run }" :aria-label="a.id">
          <svg viewBox="0 0 48 48" v-html="a.svg"></svg>
        </button>
      </nav>
      <div class="tray">
        <svg viewBox="0 0 40 40"><path d="m10 25 10-10 10 10" fill="none" stroke="#fff" stroke-width="3" /></svg>
        <svg viewBox="0 0 40 40"><path d="M5 21C5 4 24 0 33 13M34 4v10H23M6 36V27h9M7 28c3 4 6 6 10 7" fill="none" stroke="#fff" stroke-width="2" /><circle cx="28" cy="28" r="8" fill="#ff9c0b" /></svg>
        <svg viewBox="0 0 40 40"><path d="M8 36 20 5l12 31M12 26h16" fill="none" stroke="#fff" stroke-width="2" /></svg>
        <div class="quick">
          <svg viewBox="0 0 40 40"><path d="M5 16c9-9 21-9 30 0M10 21c6-6 14-6 20 0M14 26c4-4 8-4 12 0" fill="none" stroke="#fff" stroke-width="3" /><circle cx="20" cy="31" r="3" fill="#fff" /></svg>
          <svg viewBox="0 0 40 40"><path d="M6 15h6l7-6v23l-7-6H6zM25 15l10 11M35 15 25 26" fill="none" stroke="#fff" stroke-width="2" /></svg>
          <svg viewBox="0 0 40 40"><path d="M14 9h19v8M20 32H6V18M33 12h3v6" fill="none" stroke="#fff" stroke-width="2" /><path d="M8 3 4 14h4l-2 8 9-11h-4l2-8zM16 12h14l-3 8-4 9H9V22z" fill="#fff" /><path d="M30 37c-14-10-4-17 0-11 4-6 13 1 0 11z" fill="#fff" /></svg>
        </div>
        <div class="clock"><span>오전 9:37</span><span>2025-01-16</span></div>
        <svg viewBox="0 0 40 40"><path d="M18 6C8 6 9 17 9 22l-4 8h29l-4-8V19L18 6zM14 32h10c-1 6-9 6-10 0z" fill="#fff" /><path d="M15 15h8l-8 9h8" fill="none" stroke="#1b212b" stroke-width="2" /><path d="M26 6h8l-8 9h9" fill="none" stroke="#fff" stroke-width="2" /></svg>
      </div>
    </footer>
  </div>
</template>

<style>
body {
  margin: 0;
  background: #535353;
}
</style>

<style scoped>
.app {
  display: flex;
  flex-direction: column;
  height: 100vh;
  background: #535353;
  color: #e8e8e8;
  font-family: "Noto Sans", "Noto Sans CJK KR", sans-serif;
  font-size: 20px;
  line-height: 24px;
}

.app * {
  box-sizing: border-box;
}

.defs {
  position: absolute;
  width: 0;
  height: 0;
}

button,
input,
select {
  font: inherit;
  color: inherit;
}

.plain {
  display: flex;
  align-items: center;
  justify-content: center;
  padding: 0;
  border: none;
  background: none;
}

.icon {
  width: 40px;
  height: 40px;
  flex: none;
  fill: currentColor;
  color: #c1c1c1;
  overflow: visible;
}

.icon.small {
  width: 36px;
  height: 36px;
}

.chev,
.combo svg {
  width: 20px;
  height: 20px;
  fill: none;
  stroke: #999;
  stroke-width: 2;
}

.box {
  width: 118px;
  height: 42px;
  padding: 4px 6px 0;
  border: 2px solid #606060;
  border-radius: 4px;
  background: #454545;
  color: #f5f5f5;
}

.on {
  background: #2f2f2f;
}

.on .icon {
  color: #fff;
}

.cell {
  width: 64px;
}

/* 메뉴 막대 */
.menubar {
  display: flex;
  flex: none;
  align-items: center;
  height: 62px;
  padding-left: 20px;
  border-bottom: 2px solid #383838;
  font-size: 24px;
}

.ai-logo {
  width: 32px;
  height: 30px;
  border-radius: 5px;
  background: #330000;
  color: #ff9a00;
  font-size: 18px;
  font-weight: 700;
  line-height: 29px;
  text-align: center;
}

.home {
  margin: 0 26px;
}

.rule {
  width: 4px;
  height: 40px;
  background: #5e5e5e;
}

.menus {
  display: flex;
  gap: 27px;
  padding: 0 26px 2px 30px;
  font-size: 26px;
}

.menubar-right {
  display: flex;
  align-items: center;
  align-self: stretch;
  margin-left: auto;
}

.share {
  width: 88px;
  height: 48px;
  margin-right: 8px;
  padding: 0;
  border: none;
  border-radius: 24px;
  background: #1473e6;
  color: #fff;
}

.menubar-right .rule {
  margin-left: 8px;
}

.menubar-right .icon {
  width: 36px;
  height: 36px;
}

.workspace {
  display: flex;
  gap: 34px;
  padding: 0 22px 0 40px;
}

.window-buttons {
  display: flex;
  align-self: flex-start;
  height: 38px;
  margin-right: 6px;
  border: 2px solid #444;
  border-top: none;
  border-radius: 0 0 6px 6px;
}

.window-buttons button {
  width: 55px;
  padding: 0;
  border: none;
  border-right: 2px solid #444;
  background: none;
  color: #999;
}

.window-buttons button:last-child {
  border-right: none;
}

.window-buttons svg {
  width: 22px;
  height: 22px;
  fill: currentColor;
}

/* 옵션 막대 */
.options {
  display: flex;
  flex: none;
  align-items: center;
  height: 68px;
  padding-left: 9px;
  border-bottom: 2px solid #383838;
  border-left: 2px solid #424242;
}

.options label,
.mode {
  color: #b9b9b9;
  white-space: nowrap;
}

.dot-grip {
  width: 3px;
  height: 38px;
  background: repeating-linear-gradient(#383838 0 2px, transparent 2px 4px);
}

.mode {
  width: 190px;
  padding-left: 16px;
}

.vline {
  width: 2px;
  height: 50px;
  background: #4a4a4a;
}

.combo {
  display: grid;
  grid-template-columns: 1fr 36px;
  align-items: center;
  border: 2px solid #606060;
  border-radius: 4px;
  background: #454545;
}

.combo select {
  grid-row: 1;
  grid-column: 1 / 3;
  height: 100%;
  padding: 4px 12px 0;
  border: none;
  background: none;
  appearance: none;
}

.combo svg {
  grid-row: 1;
  grid-column: 2;
  justify-self: center;
  stroke: #fff;
  pointer-events: none;
}

.preset {
  width: 216px;
  height: 42px;
  margin: 0 10px;
  font-size: 22px;
}

.orient {
  display: flex;
  width: 98px;
  height: 48px;
  border: 2px solid #606060;
  border-radius: 5px;
}

.orient button {
  flex: 1;
}

.orient .icon {
  width: 34px;
  height: 36px;
}

.name-group {
  display: flex;
  align-items: center;
  align-self: flex-start;
  padding: 6px 13px 0 8px;
}

.name-group label {
  padding: 0 8px;
}

.name-group .box {
  width: 240px;
  padding-top: 0;
}

.name-group .icon {
  width: 36px;
  height: 36px;
}

.move {
  width: 48px;
  height: 48px;
  border-radius: 5px;
}

.move .icon {
  width: 36px;
  height: 36px;
}

.option-icons {
  display: flex;
  gap: 2px;
  padding-left: 10px;
}

.option-icons .icon {
  width: 36px;
  height: 36px;
}

.cell.ref {
  width: 44px;
}

.cell.ref .icon {
  width: 40px;
  height: 40px;
}

.field {
  display: flex;
  flex: none;
  align-items: center;
  justify-content: flex-end;
  gap: 6px;
  width: 160px;
}

.field.wide {
  width: 174px;
}

.rearrange {
  width: 148px;
  height: 38px;
  margin: 0 12px 0 10px;
  padding: 0;
  border: 2px solid #777;
  border-radius: 4px;
  background: none;
  color: #f5f5f5;
  font-size: 22px;
}

.reshape {
  margin: 0 24px 0 18px;
}

.reshape .icon {
  width: 36px;
  height: 36px;
  color: #777;
}

.reshape .chev,
.option-right .chev {
  stroke: #777;
}

.spark {
  margin-left: 24px;
}

.option-right {
  display: flex;
  align-items: center;
  gap: 6px;
  margin-left: auto;
  padding-right: 28px;
}

.snap {
  padding-left: 8px;
}

.last {
  padding-left: 20px;
}

/* 작업 영역 */
.workspace-area {
  display: flex;
  flex: 1;
  gap: 2px;
  min-height: 0;
  border-bottom: 2px solid #383838;
}

.strip {
  display: flex;
  flex: none;
  align-items: center;
  height: 24px;
  padding-left: 12px;
  border-bottom: 2px solid #383838;
  background: #424242;
}

.dbl {
  display: block;
  width: 14px;
  height: 12px;
  fill: none;
  stroke: #d0d0d0;
  stroke-width: 2;
}

.grip {
  width: 38px;
  height: 8px;
  background: repeating-linear-gradient(90deg, #383838 0 2px, transparent 2px 4px);
}

.toolbox {
  display: flex;
  flex: none;
  flex-direction: column;
  width: 144px;
  border: 2px solid #383838;
  border-width: 0 2px;
}

.toolbox .grip {
  align-self: center;
  margin: 6px 0 26px;
}

.tools {
  display: grid;
  grid-template-columns: 56px 56px;
  gap: 4px;
  padding-left: 12px;
}

.tool {
  height: 44px;
  border-radius: 4px;
}

.tool .icon,
.tool.on .icon {
  width: 36px;
  height: 36px;
  color: #c1c1c1;
}

.type-glyph {
  font-family: "Liberation Serif", serif;
  font-size: 44px;
  font-weight: 700;
}

.hline {
  height: 2px;
  margin: 5px 10px 9px;
  background: #4a4a4a;
}

.paint {
  position: relative;
  flex: none;
  height: 108px;
  margin: 0 10px;
}

.fill-box,
.stroke-box {
  position: absolute;
  border: 2px solid #2f2f2f;
}

.fill-box {
  top: 0;
  left: 0;
  width: 72px;
  height: 72px;
  background: #fff;
}

.stroke-box {
  top: 36px;
  left: 37px;
  width: 70px;
  height: 72px;
  padding: 16px;
  background: #060000;
  box-shadow: inset 0 0 0 2px #fff;
}

.stroke-box i {
  display: block;
  height: 100%;
  border: 2px solid #fff;
  background: #535353;
}

.swap {
  position: absolute;
  top: 0;
  right: 6px;
}

.defaults {
  position: absolute;
  bottom: 0;
  left: 0;
}

.swap .icon,
.defaults .icon,
.mini-tools .icon {
  width: 26px;
  height: 26px;
}

.trio {
  display: flex;
  flex: none;
  width: 122px;
  height: 42px;
  margin: 12px 0 0 8px;
  border: 2px solid #5e5e5e;
  border-radius: 4px;
}

.trio button {
  display: flex;
  flex: 1;
  align-items: center;
  justify-content: center;
  padding: 0;
  border: none;
  border-right: 1px solid #606060;
  background: none;
}

.trio .on {
  background: #2f2f2f;
}

.trio.draw {
  height: 40px;
  margin-top: 7px;
}

.trio.draw .icon {
  width: 28px;
  height: 28px;
  color: #c1c1c1;
}

.trio.draw .off .icon {
  color: #707070;
}

.chip {
  width: 26px;
  height: 26px;
  border: 2px solid #000;
  background: #fff;
}

.chip.ramp {
  background: linear-gradient(90deg, #fff, #222);
}

.chip.none,
.basics .none,
.sw-none {
  background: linear-gradient(to bottom right, #fff 43%, #f00 43% 57%, #fff 57%);
}

.screens {
  margin-top: 12px;
}

.screens .icon {
  width: 44px;
}

.dots {
  gap: 3px;
  margin-top: 40px;
}

.dots i {
  width: 8px;
  height: 8px;
  border-radius: 50%;
  background: #c1c1c1;
}

/* 문서 */
.document {
  display: flex;
  flex: 1;
  flex-direction: column;
  min-width: 0;
  border: 2px solid #383838;
  border-width: 0 2px;
}

.doc-tabs {
  flex: none;
  height: 58px;
  border-bottom: 2px solid #383838;
  background: #424242;
}

.doc-tab {
  display: inline-flex;
  align-items: center;
  gap: 30px;
  height: 56px;
  padding: 0 12px 2px 20px;
  border-right: 2px solid #383838;
  background: #535353;
  font-size: 25px;
}

.doc-tab svg {
  width: 14px;
  height: 14px;
  fill: none;
  stroke: #e8e8e8;
  stroke-width: 2;
}

.doc-body {
  display: flex;
  flex: 1;
  min-height: 0;
}

.doc-main {
  display: flex;
  flex: 1;
  flex-direction: column;
  min-width: 0;
}

.canvas {
  position: relative;
  flex: 1;
  overflow: hidden;
  background: #737373;
}

.board {
  position: absolute;
  width: 342px;
  height: 342px;
  padding: 5px 6px;
  background: #fff;
  box-shadow: 0 0 0 1px #5c5c5c, 1px 2px 3px 1px #505050;
}

.board-no {
  display: block;
  width: 61px;
  height: 61px;
  border: 2px solid #000;
  background: #dcdcdc;
  color: #000;
  font-size: 36px;
  line-height: 56px;
  text-align: center;
}

.active .board-no {
  background: #c6e2fe;
}

.marquee {
  position: absolute;
  inset: 0;
  overflow: visible;
}

.marquee rect {
  fill: none;
}

.marquee .edge {
  stroke: #4b9dea;
  stroke-width: 4;
}

.marquee .dash {
  stroke: #fff;
  stroke-width: 2;
  stroke-dasharray: 10 6;
}

.marquee .handle {
  fill: #fff;
  stroke: #4b9dea;
  stroke-width: 2;
}

.hint {
  display: flex;
  flex: none;
  align-items: center;
  gap: 22px;
  height: 50px;
  padding: 0 0 4px 9px;
  border-top: 3px solid #474747;
  color: #c4c4c4;
  font-size: 22px;
}

.hint p {
  margin: 0;
  white-space: nowrap;
}

.help {
  width: 29px;
  height: 29px;
  border-radius: 50%;
  background: #c1c1c1;
  color: #454545;
  font-weight: 700;
  line-height: 29px;
  text-align: center;
}

.vscroll {
  display: flex;
  flex-direction: column;
  align-items: center;
  justify-content: space-between;
  width: 32px;
  padding: 7px 0;
  background: #4a4a4a;
}

.thumb {
  background: #606060;
  border-radius: 16px;
}

.vscroll .thumb {
  width: 32px;
  height: 50px;
}

.status {
  display: flex;
  flex: none;
  align-items: center;
  height: 32px;
  padding-left: 6px;
  overflow: hidden;
}

.combo.split {
  width: 140px;
  height: 46px;
  margin-right: 6px;
  align-self: flex-start;
}

.combo.split select {
  padding: 2px 4px 0;
}

.combo.split svg {
  align-self: stretch;
  justify-self: stretch;
  width: 36px;
  height: 38px;
  padding: 8px;
  border-left: 2px solid #606060;
}

.combo.split.page {
  width: 120px;
}

.pager {
  display: flex;
  gap: 16px;
  padding: 0 10px;
}

.pager + .page {
  margin-right: 0;
}

.pager.next {
  padding: 0 16px;
}

.pager svg,
.play svg {
  width: 18px;
  height: 18px;
  fill: #c1c1c1;
}

.dim svg {
  fill: #7a7a7a;
}

.current {
  width: 400px;
  height: 32px;
  border: 2px solid #4a4a4a;
  border-width: 0 2px;
  color: #c8c8c8;
  line-height: 34px;
  text-align: center;
}

.play {
  width: 36px;
}

.hscroll {
  display: flex;
  flex: 1;
  align-items: center;
  justify-content: space-between;
  height: 32px;
  padding: 0 7px;
  background: #4a4a4a;
}

.hscroll .thumb {
  width: 50px;
  height: 32px;
}

.corner {
  width: 32px;
}

/* 오른쪽 패널 */
.docks {
  display: flex;
  flex: none;
  flex-direction: column;
  width: 654px;
}

.dock-strip {
  gap: 66px;
  padding: 0 12px 0 49px;
  border-left: 2px solid #383838;
}

.dock-strip span:last-child {
  margin-left: auto;
}

.dock-cols {
  display: flex;
  flex: 1;
  gap: 2px;
  min-height: 0;
}

.dock {
  width: 78px;
  border: 2px solid #383838;
  border-width: 0 2px;
}

.dock-group {
  display: flex;
  flex-direction: column;
  align-items: center;
  padding: 6px 0;
  border-bottom: 2px solid #383838;
}

.dock-group .grip {
  margin-bottom: 4px;
}

.dock-group button {
  width: 56px;
  height: 56px;
}

.dock-group .icon {
  width: 36px;
  height: 36px;
}

.char-icon {
  padding-right: 3px;
  border-right: 2px solid #c1c1c1;
  color: #c1c1c1;
  font-size: 36px;
  font-weight: 600;
  line-height: 34px;
}

.panels {
  display: flex;
  flex: 1;
  flex-direction: column;
  gap: 2px;
  min-width: 0;
}

.panel {
  display: flex;
  flex-direction: column;
  border: 2px solid #383838;
  border-top: none;
}

.panel.grow {
  flex: 1;
  border-top: 2px solid #383838;
  border-bottom: none;
}

.tabs {
  display: flex;
  flex: none;
  height: 54px;
  background: #424242;
  box-shadow: inset 0 -2px #383838;
}

.tab {
  padding: 0 18px 6px 20px;
  border-right: 2px solid #383838;
  color: #a8a8a8;
  font-size: 25px;
}

.tab.on {
  background: #535353;
  color: #f0f0f0;
}

.color-tab {
  gap: 12px;
  padding-left: 10px;
}

.color-tab svg {
  width: 12px;
  height: 24px;
  margin-top: 10px;
  fill: none;
  stroke: #aaa;
  stroke-width: 2;
}

.panel-menu {
  margin-left: auto;
  padding-right: 2px;
}

.color-body {
  padding: 12px 34px 12px 10px;
}

.mixer {
  display: flex;
  padding-right: 2px;
}

.mini {
  width: 92px;
}

.mini-tools {
  display: flex;
  gap: 14px;
}

.mini-paint {
  position: relative;
  width: 60px;
  height: 60px;
}

.mini .mini-paint {
  margin-top: 10px;
}

.mini-paint .fill-box {
  width: 40px;
  height: 40px;
}

.mini-paint .stroke-box {
  top: 20px;
  left: 20px;
  width: 40px;
  height: 40px;
  padding: 8px;
}

.sliders {
  flex: 1;
  padding-top: 2px;
}

.slider-row {
  display: flex;
  align-items: center;
  height: 50px;
  color: #b9b9b9;
}

.slider-row label {
  width: 20px;
  text-align: center;
}

.slider-row input[type="range"] {
  flex: 1;
  min-width: 0;
  height: 28px;
  margin: 4px 5px 0 10px;
  background-color: transparent;
  background-position: 9px 2px;
  background-size: calc(100% - 18px) 8px;
  background-repeat: no-repeat;
  appearance: none;
}

.slider-row input[type="range"]::-webkit-slider-thumb {
  width: 18px;
  height: 16px;
  margin-top: 12px;
  background: #c1c1c1;
  clip-path: polygon(50% 0, 100% 45%, 100% 100%, 0 100%, 0 45%);
  appearance: none;
}

.slider-row .box {
  width: 71px;
  height: 40px;
  padding-top: 0;
  margin-right: 5px;
}

.range-c {
  background-image: linear-gradient(90deg, #fff, #9ad6f3 40%, #00b2ee 70%, #009be0);
}

.range-m {
  background-image: linear-gradient(90deg, #fff, #f0a0c8 45%, #e4007f);
}

.range-y {
  background-image: linear-gradient(90deg, #fff, #fff68c 50%, #ffed00 90%);
}

.range-k {
  background-image: linear-gradient(90deg, #fff, #999 50%, #231815);
}

.hex-row {
  display: flex;
  align-items: center;
  height: 40px;
  margin: 8px 0 14px;
}

.basics {
  display: flex;
  gap: 2px;
  margin-right: auto;
  border: 2px solid #2f2f2f;
  background: #2f2f2f;
}

.basics span {
  width: 24px;
  height: 24px;
  background: #fff;
}

.basics .black {
  background: #060000;
}

.hex-row label {
  margin-right: 12px;
  border-bottom: 2px dotted #c1c1c1;
}

.hex-row .box {
  width: 129px;
  height: 40px;
  padding-left: 8px;
}

.spectrum {
  position: relative;
  height: 378px;
  margin-left: 2px;
  border: 2px solid #2f2f2f;
  background: linear-gradient(90deg, #e8141b, #f39c1c 11%, #f7ef2a 17%, #a3cc25 24%, #6ab82e 33%, #6bc5cf 51%, #2fb2e8 54%, #1b479c 67%, #a9529b 83%, #ea2a8f 91%, #e8141b);
}

.low,
.shade {
  position: absolute;
  inset: 0;
}

.low {
  background: linear-gradient(90deg, #a51f23, #c8801a 9%, #b5c51c 17%, #2bb03a 28%, #1fae37 40%, #00b09d 47%, #00a0c0 52%, #0045a5 59%, #003093 66%, #4a2390 75%, #951a8a 85%, #b8105a 91%, #a51f23);
  mask-image: linear-gradient(transparent 44%, #000 68%);
}

.shade {
  background: linear-gradient(#fff, rgba(255, 255, 255, .62) 13%, rgba(255, 255, 255, .3) 26%, rgba(255, 255, 255, 0) 48%, rgba(0, 0, 0, 0) 52%, rgba(0, 0, 0, .1) 62%, rgba(0, 0, 0, .4) 74%, rgba(4, 0, 0, .8) 90%, #040000);
}

.lib {
  padding-right: 20px;
}

.swatch-head {
  display: flex;
  align-items: flex-end;
  height: 84px;
  padding: 0 9px 10px 10px;
}

.swatch-head .mini-paint {
  margin-right: auto;
}

.view {
  width: 48px;
  height: 48px;
}

.view .icon {
  width: 34px;
  height: 34px;
}

.view.single {
  width: 52px;
  height: 52px;
  margin-right: 10px;
  border: 2px solid #777;
  border-radius: 4px;
}

.view-group {
  display: flex;
  border: 2px solid #606060;
  border-radius: 4px;
}

.swatch-list {
  flex: 1;
  margin: 0 9px 0 10px;
  border: 2px solid #5f5f5f;
}

.swatch-grid {
  display: grid;
  grid-template-columns: repeat(15, 26px);
  gap: 2px;
}

.swatch-grid + .swatch-grid {
  margin-top: 6px;
}

.swatch {
  width: 26px;
  height: 26px;
}

.folder {
  fill: #c1c1c1;
}

.sw-white {
  border: 2px solid #fff;
  background: #fff;
  box-shadow: inset 0 0 0 2px #000;
}

.sw-bw {
  background: linear-gradient(90deg, #fff, #000);
}

.sw-blue {
  background: linear-gradient(90deg, #d5ddf0, #2c8fcf 60%, #0f6bae);
}

.sw-pink {
  background: linear-gradient(90deg, #ee73a1, transparent), repeating-conic-gradient(#ccc 0 25%, #fff 0 50%) 0 0 / 8px 8px;
}

.sw-glow {
  background: radial-gradient(#fff, #f18e26 65%);
}

.sw-checker {
  border: 1px solid #fff;
  background: radial-gradient(transparent 58%, #e9c466 60%, #fff 66%), repeating-conic-gradient(#ccc 0 25%, #fff 0 50%) 0 0 / 8px 8px;
}

.swatch-foot {
  display: flex;
  justify-content: space-between;
  height: 40px;
  padding: 0 48px 0 16px;
}

.swatch-foot div {
  display: flex;
  gap: 16px;
}

.swatch-foot .icon {
  width: 36px;
  height: 36px;
}

/* 작업 표시줄 */
.taskbar {
  display: grid;
  flex: none;
  grid-template-columns: 14fr auto 19fr;
  align-items: center;
  height: 96px;
  border-top: 2px solid #40454f;
  background: linear-gradient(90deg, #1b1f28, #19222d 20%, #11205c 25%, #101f60 32%, #161f5c 36%, #11244f 41%, #151c5e 45%, #1c1f33 50%, #1c1f38 53%, #101f5e 57%, #13204e 63%, #1e2024 67%, #1f2022 72%, #1a232d 77%, #1b222e);
  color: #fff;
}

.weather {
  position: relative;
  justify-self: start;
  margin-left: 38px;
}

.weather svg {
  width: 52px;
  height: 56px;
}

.badge {
  position: absolute;
  top: -8px;
  right: -4px;
  width: 32px;
  height: 32px;
  border-radius: 50%;
  background: #ff99a4;
  color: #000;
  line-height: 32px;
  text-align: center;
}

.apps {
  display: flex;
  gap: 40px;
}

.app-btn {
  position: relative;
}

.app-btn svg {
  width: 48px;
  height: 48px;
  font-family: "Noto Sans", "Noto Sans CJK KR", sans-serif;
}

.run::after {
  content: "";
  position: absolute;
  bottom: -14px;
  width: 12px;
  height: 6px;
  border-radius: 3px;
  background: #a0a4b8;
}

.tray {
  display: flex;
  align-items: center;
  justify-self: end;
  gap: 24px;
  padding-right: 36px;
}

.tray svg {
  flex: none;
  width: 40px;
  height: 40px;
}

.quick {
  display: flex;
  gap: 8px;
}

.clock {
  display: flex;
  flex-direction: column;
  align-items: flex-end;
  font-size: 24px;
  line-height: 32px;
  white-space: nowrap;
}

.tray > svg:last-child {
  margin-left: -10px;
}
</style>
